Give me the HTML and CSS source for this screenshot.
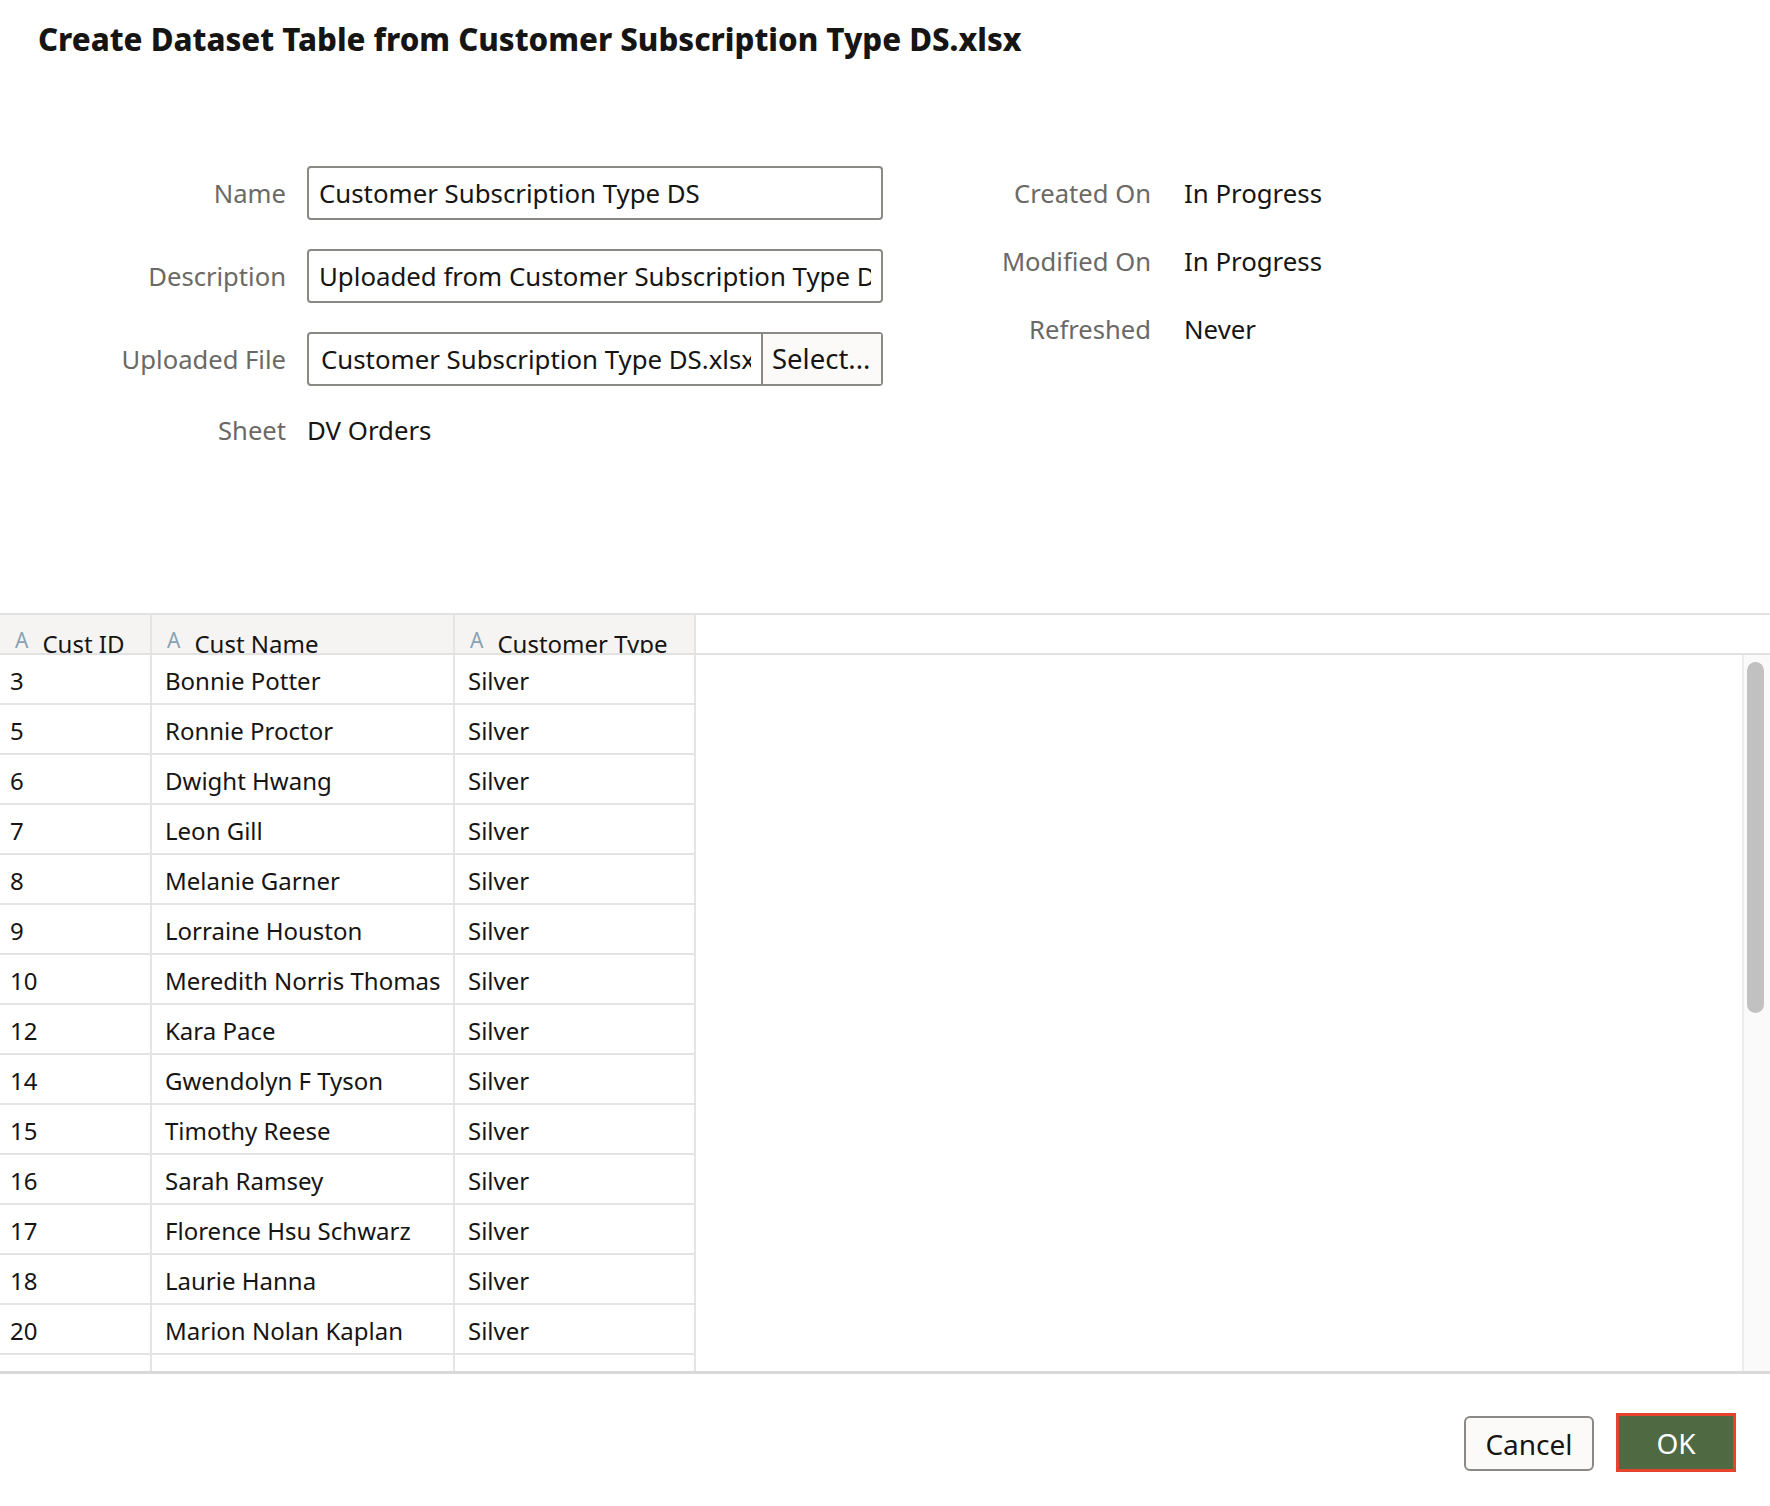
FILE: index.html
```html
<!DOCTYPE html>
<html>
<head>
<meta charset="utf-8">
<link rel="stylesheet" href="styles.css">
</head>
<body>
<div class="dialog">
  <h1 class="title">Create Dataset Table from Customer Subscription Type DS.xlsx</h1>
  <div class="form">
    <div class="col-left">
      <div class="frow"><span class="label">Name</span><div class="input"><span class="itext">Customer Subscription Type DS</span></div></div>
      <div class="frow"><span class="label">Description</span><div class="input"><span class="itext">Uploaded from Customer Subscription Type DS.xlsx</span></div></div>
      <div class="frow"><span class="label">Uploaded File</span><div class="input file"><span class="fname">Customer Subscription Type DS.xlsx</span><span class="select">Select...</span></div></div>
      <div class="frow sheet"><span class="label">Sheet</span><span class="value">DV Orders</span></div>
    </div>
    <div class="col-right">
      <div class="rrow"><span class="rlabel">Created On</span><span class="value">In Progress</span></div>
      <div class="rrow"><span class="rlabel">Modified On</span><span class="value">In Progress</span></div>
      <div class="rrow"><span class="rlabel">Refreshed</span><span class="value">Never</span></div>
    </div>
  </div>
  <div class="table">
    <div class="thead">
      <div class="th"><span class="ticon">A</span>Cust ID</div>
      <div class="th"><span class="ticon">A</span>Cust Name</div>
      <div class="th"><span class="ticon">A</span>Customer Type</div>
      <div class="th-empty"></div>
    </div>
    <div class="tbody">
      <div class="rows">
        <div class="tr"><div class="td">3</div><div class="td">Bonnie Potter</div><div class="td">Silver</div></div>
        <div class="tr"><div class="td">5</div><div class="td">Ronnie Proctor</div><div class="td">Silver</div></div>
        <div class="tr"><div class="td">6</div><div class="td">Dwight Hwang</div><div class="td">Silver</div></div>
        <div class="tr"><div class="td">7</div><div class="td">Leon Gill</div><div class="td">Silver</div></div>
        <div class="tr"><div class="td">8</div><div class="td">Melanie Garner</div><div class="td">Silver</div></div>
        <div class="tr"><div class="td">9</div><div class="td">Lorraine Houston</div><div class="td">Silver</div></div>
        <div class="tr"><div class="td">10</div><div class="td">Meredith Norris Thomas</div><div class="td">Silver</div></div>
        <div class="tr"><div class="td">12</div><div class="td">Kara Pace</div><div class="td">Silver</div></div>
        <div class="tr"><div class="td">14</div><div class="td">Gwendolyn F Tyson</div><div class="td">Silver</div></div>
        <div class="tr"><div class="td">15</div><div class="td">Timothy Reese</div><div class="td">Silver</div></div>
        <div class="tr"><div class="td">16</div><div class="td">Sarah Ramsey</div><div class="td">Silver</div></div>
        <div class="tr"><div class="td">17</div><div class="td">Florence Hsu Schwarz</div><div class="td">Silver</div></div>
        <div class="tr"><div class="td">18</div><div class="td">Laurie Hanna</div><div class="td">Silver</div></div>
        <div class="tr"><div class="td">20</div><div class="td">Marion Nolan Kaplan</div><div class="td">Silver</div></div>
        <div class="tr"><div class="td">21</div><div class="td">Anna Lee</div><div class="td">Silver</div></div>
      </div>
      <div class="scrollbar"><div class="thumb"></div></div>
    </div>
  </div>
  <div class="footer">
    <button class="btn cancel">Cancel</button>
    <button class="btn ok">OK</button>
  </div>
</div>
</body>
</html>
```

FILE: styles.css
```css
* { box-sizing: border-box; }
html, body { margin: 0; padding: 0; background: #fff; }
body { font-family: "Noto Sans", "Open Sans", sans-serif; color: #161513; }
.dialog { width: 1770px; height: 1506px; display: flex; flex-direction: column; overflow: hidden; }
.title { margin: 0; padding: 17px 0 0 38px; height: 166px; font-size: 31.2px; font-weight: 800; color: #161513; line-height: 44px; letter-spacing: 0; }
.form { display: flex; height: 447px; }
.col-left { width: 883px; display: flex; flex-direction: column; gap: 29px; }
.frow { display: flex; align-items: center; height: 54px; }
.label { width: 286px; text-align: right; font-size: 25.6px; color: #6b6966; margin-right: 21px; }
.input { width: 576px; height: 54px; border: 2px solid #8b8986; border-radius: 4px; padding: 0 10px; font-size: 25.8px; line-height: 50px; color: #161513; display: flex; }
.itext { flex: 1; overflow: hidden; white-space: nowrap; }
.input.file { padding: 0; }
.fname { flex: 1; margin: 0 10px 0 12px; overflow: hidden; white-space: nowrap; }
.select { width: 120px; flex: none; border-left: 2px solid #8b8986; background: #fbfaf9; padding-left: 9px; font-size: 27.5px; white-space: nowrap; }
.frow.sheet { height: 40px; margin-top: -5px; }
.value { font-size: 25.8px; color: #161513; }
.col-right { display: flex; flex-direction: column; padding-top: 7px; gap: 28px; }
.rrow { display: flex; align-items: center; height: 40px; }
.rlabel { width: 268px; text-align: right; margin-right: 33px; font-size: 25.6px; color: #6b6966; }
.table { height: 761px; display: flex; flex-direction: column; border-top: 2px solid #e2e2e2; border-bottom: 3px solid #d9d9d9; }
.thead { display: grid; grid-template-columns: 152px 303px 241px 1fr; height: 40px; border-bottom: 2px solid #e2e2e2; overflow: hidden; }
.th { background: #f5f4f2; border-right: 2px solid #e4e4e4; font-size: 24px; white-space: nowrap; padding-left: 15px; line-height: 30px; padding-top: 14px; overflow: hidden; color: #161513; }
.th-empty { background: #fff; }
.ticon { color: #8aa2b2; font-size: 21px; margin-right: 14px; position: relative; top: -5px; }
.tbody { flex: 1; display: flex; overflow: hidden; }
.rows { flex: 1; overflow: hidden; }
.tr { display: grid; grid-template-columns: 152px 303px 241px; height: 50px; }
.td { border-right: 2px solid #e4e4e4; border-bottom: 2px solid #e4e4e4; font-size: 24px; line-height: 48px; padding-top: 2px; padding-left: 10px; white-space: nowrap; overflow: hidden; }
.tr .td:nth-child(n+2) { padding-left: 13px; }
.scrollbar { width: 28px; border-left: 2px solid #ececec; background: #fafafa; padding: 7px 0 0 3px; }
.thumb { width: 17px; height: 351px; background: #c1c1c1; border-radius: 9px; }
.footer { flex: 1; display: flex; justify-content: flex-end; align-items: flex-start; padding: 39px 34px 0 0; gap: 22px; }
.btn { font-family: "Noto Sans", "Open Sans", sans-serif; font-size: 28px; cursor: pointer; }
.cancel { width: 130px; height: 55px; border: 2px solid #8b8986; border-radius: 6px; background: #fbfaf8; color: #161513; margin-top: 3px; }
.ok { width: 120px; height: 59px; border: 3px solid #e5432c; border-radius: 0; background: #4f6a43; color: #fff; }
```
